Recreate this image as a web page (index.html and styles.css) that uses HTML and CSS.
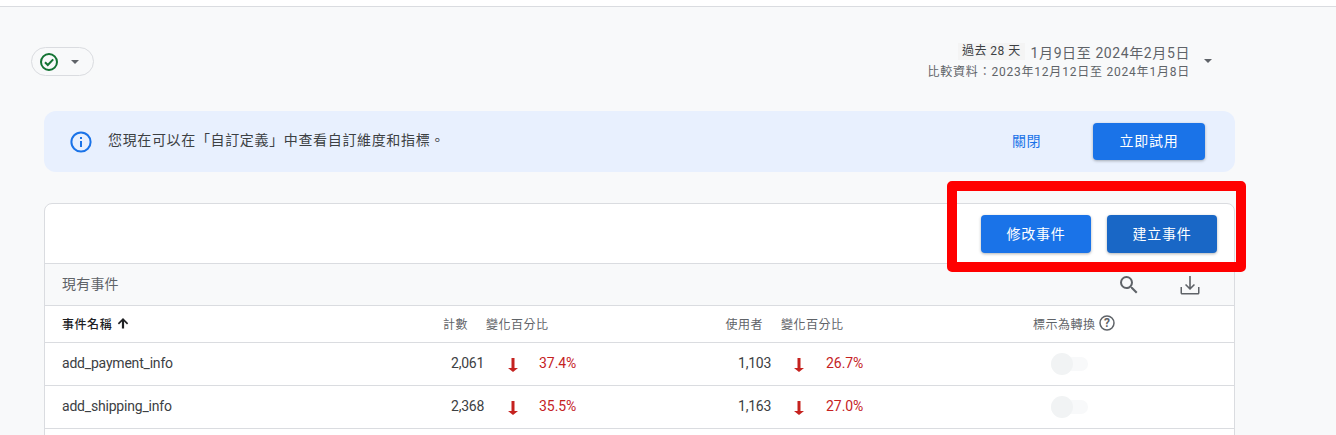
FILE: index.html
```html
<!DOCTYPE html>
<html lang="zh-Hant">
<head>
<meta charset="utf-8">
<title>事件</title>
<link rel="stylesheet" href="styles.css">
</head>
<body>
<div class="topbar"></div>
<main class="page">
  <div class="filters">
    <button class="chip">
      <svg class="chip-check" viewBox="0 0 20 20" width="20" height="20"><circle cx="10" cy="10" r="8" fill="none" stroke="#137333" stroke-width="2"/><path d="M6 10.200l2.800 2.800L14.200 7.400" fill="none" stroke="#137333" stroke-width="2"/></svg>
      <span class="caret"></span>
    </button>
    <div class="dates">
      <div class="dates-text">
        <div class="date-main"><span class="date-tag">過去 28 天</span><span class="date-range">1月9日至 2024年2月5日</span></div>
        <div class="date-sub">比較資料：2023年12月12日至 2024年1月8日</div>
      </div>
      <span class="caret date-caret"></span>
    </div>
  </div>

  <section class="banner">
    <svg class="banner-icon" viewBox="0 0 22 22" width="22" height="22"><circle cx="11" cy="11" r="9.600" fill="none" stroke="#1a73e8" stroke-width="2"/><rect x="10" y="10" width="2" height="6" fill="#1a73e8"/><rect x="10" y="6" width="2" height="2" fill="#1a73e8"/></svg>
    <p class="banner-text">您現在可以在「自訂定義」中查看自訂維度和指標。</p>
    <a class="banner-close">關閉</a>
    <button class="btn">立即試用</button>
  </section>

  <section class="card">
    <div class="card-actions">
      <button class="btn">修改事件</button>
      <button class="btn btn-dark">建立事件</button>
    </div>
    <div class="card-title">
      <span class="card-title-text">現有事件</span>
      <div class="card-tools">
        <svg viewBox="0 0 24 24" width="24" height="24"><path fill="#5f6368" d="M15.500 14h-.79l-.28-.27A6.470 6.470 0 0 0 16 9.500 6.500 6.500 0 1 0 9.500 16c1.610 0 3.090-.59 4.230-1.570l.27.28v.79l5 4.990L20.490 19l-4.990-5zm-6 0C7.010 14 5 11.990 5 9.500S7.010 5 9.500 5 14 7.010 14 9.500 11.990 14 9.500 14z"/></svg>
        <svg viewBox="0 0 24 24" width="24" height="24"><path fill="#5f6368" d="M20 14v6H4v-6H2.500v6c0 .8.7 1.500 1.500 1.500h16c.8 0 1.500-.7 1.500-1.500v-6H20zM12 17l-5-5 1.100-1.100 3.100 3.100V3h1.600v11l3.100-3.100L17 12l-5 5z"/></svg>
      </div>
    </div>
    <div class="table-head">
      <div class="th-name">事件名稱 <svg viewBox="0 0 12 12" width="12" height="12"><path fill="#202124" d="M4.900 11.500V4.600L2 7.400.8 6.200 6 1l5.200 5.200L10 7.400 7.100 4.600v6.900z"/></svg></div>
      <div class="num">計數</div>
      <div class="th-change">變化百分比</div>
      <div class="num">使用者</div>
      <div class="th-change">變化百分比</div>
      <div class="th-conv">標示為轉換 <svg viewBox="0 0 16 16" width="16" height="16"><circle cx="8" cy="8" r="7" fill="none" stroke="#5f6368" stroke-width="1.500"/><text x="8" y="12" text-anchor="middle" class="help-mark">?</text></svg></div>
    </div>
    <div class="row">
      <div class="name">add_payment_info</div>
      <div class="value">2,061</div>
      <div class="arrow"><svg viewBox="0 0 12 16" width="12" height="16"><path fill="#c5221f" d="M4.500 1h3v10H11L6 15 1 11h3.500z"/></svg></div>
      <div class="pct">37.4%</div>
      <div class="value">1,103</div>
      <div class="arrow arrow-users"><svg viewBox="0 0 12 16" width="12" height="16"><path fill="#c5221f" d="M4.500 1h3v10H11L6 15 1 11h3.500z"/></svg></div>
      <div class="pct">26.7%</div>
      <div class="conv"><span class="toggle"><span class="knob"></span></span></div>
    </div>
    <div class="row">
      <div class="name">add_shipping_info</div>
      <div class="value">2,368</div>
      <div class="arrow"><svg viewBox="0 0 12 16" width="12" height="16"><path fill="#c5221f" d="M4.500 1h3v10H11L6 15 1 11h3.500z"/></svg></div>
      <div class="pct">35.5%</div>
      <div class="value">1,163</div>
      <div class="arrow arrow-users"><svg viewBox="0 0 12 16" width="12" height="16"><path fill="#c5221f" d="M4.500 1h3v10H11L6 15 1 11h3.500z"/></svg></div>
      <div class="pct">27.0%</div>
      <div class="conv"><span class="toggle"><span class="knob"></span></span></div>
    </div>
    <div class="row"></div>
  </section>
</main>
<div class="highlight"></div>
</body>
</html>
```

FILE: styles.css
```css
* { box-sizing: border-box; }
html, body { margin: 0; height: 435px; overflow: hidden; }
body {
  position: relative;
  background: #f8f9fa;
  color: #3c4043;
  font-family: Roboto, "Noto Sans CJK TC", sans-serif;
  font-size: 14px;
}
.topbar { height: 7px; background: #fff; border-bottom: 1px solid #dadce0; }
.page { padding: 0 101px 0 44px; }

.filters {
  display: flex;
  justify-content: space-between;
  height: 104px;
  padding: 36px 0 0;
  margin-left: -13px;
  margin-right: -101px;
}
.chip {
  display: flex;
  align-items: center;
  width: 63px;
  height: 29px;
  margin-top: 4px;
  padding: 0 0 0 7px;
  background: transparent;
  border: 1px solid #dadce0;
  border-radius: 15px;
}
.chip-check { flex: none; }
.caret {
  display: block;
  width: 0;
  height: 0;
  margin-left: 12px;
  border-left: 4.500px solid transparent;
  border-right: 4.500px solid transparent;
  border-top: 4.500px solid #5f6368;
}
.dates { display: flex; align-items: flex-start; padding-right: 124px; }
.dates-text { text-align: right; color: #5f6368; }
.date-main { display: flex; justify-content: flex-end; align-items: center; gap: 6px; height: 17px; }
.date-range { font-size: 14px; letter-spacing: .6px; }
.date-tag { background: #f4f4f4; font-size: 12px; height: 17px; line-height: 16px; padding: 0 4px; letter-spacing: .45px; color: #3c4043; }
.date-sub { margin-top: 5px; font-size: 12px; line-height: 15px; letter-spacing: .78px; }
.date-caret { margin: 16px 0 0 14px; }

.banner {
  display: flex;
  align-items: center;
  width: 1191px;
  height: 61px;
  padding: 0 30px 0 26px;
  background: #e8f0fe;
  border-radius: 12px;
}
.banner-icon { flex: none; margin-top: 1px; }
.banner-text { flex: 1; margin: 0 0 0 16px; padding-bottom: 5px; font-size: 14px; letter-spacing: .65px; color: #3c4043; }
.banner-close { margin-right: 52px; padding-bottom: 3px; color: #1a73e8; font-size: 14px; letter-spacing: .5px; }

.btn {
  display: block;
  width: 112px;
  height: 37px;
  padding: 0 0 3px;
  border: 0;
  border-radius: 4px;
  background: #1a73e8;
  color: #fff;
  font: inherit;
  font-size: 14px;
  letter-spacing: .7px;
  box-shadow: 0 1px 3px rgba(60,64,67,.4);
}

.card {
  width: 1191px;
  margin-top: 31px;
  background: #fff;
  border: 1px solid #dadce0;
  border-radius: 8px 8px 0 0;
}
.card-actions {
  display: flex;
  justify-content: flex-end;
  gap: 16px;
  height: 60px;
  padding: 11px 17px 0 0;
  border-bottom: 1px solid #dadce0;
}
.card-actions .btn { width: 110px; height: 38px; }
.btn-dark { background: #1967c6; }
.card-title {
  display: flex;
  justify-content: space-between;
  align-items: center;
  height: 42px;
  padding: 0 32px 0 17px;
  background: #f8f9fa;
  border-bottom: 1px solid #dadce0;
  color: #5f6368;
}
.card-title-text { padding-bottom: 4px; letter-spacing: .2px; }
.card-tools { display: flex; gap: 37px; margin-top: 1px; }

.table-head, .row { display: grid; align-items: center; padding-left: 17px; border-bottom: 1px solid #dadce0; }
.table-head {
  grid-template-columns: 338px 68px 182px 113px 252px 1fr;
  height: 37px;
  padding-bottom: 2px;
  font-size: 12px;
  color: #5f6368;
}
.th-name { display: flex; align-items: center; gap: 5px; color: #202124; font-weight: 500; letter-spacing: .55px; }
.num { text-align: right; letter-spacing: .5px; }
.th-change { padding-left: 18px; letter-spacing: .5px; }
.th-conv { display: flex; align-items: center; gap: 3px; padding-left: 18px; letter-spacing: .5px; }
.help-mark { font-size: 12px; font-weight: 700; fill: #5f6368; letter-spacing: 0; }

.row {
  grid-template-columns: 338px 84px 55px 111px 121px 55px 189px 1fr;
  height: 43px;
  font-size: 14px;
  color: #3c4043;
}
.name { padding-bottom: 2px; letter-spacing: -.2px; }
.value { padding-bottom: 2px; text-align: right; letter-spacing: -.25px; }
.arrow { display: flex; padding-left: 23px; padding-top: 2px; }
.arrow-users { padding-left: 22px; }
.pct { padding-bottom: 2px; color: #c5221f; font-size: 14px; letter-spacing: -.05px; }
.conv { padding-left: 36px; }
.toggle {
  display: block;
  position: relative;
  width: 37px;
  height: 14px;
  border-radius: 7px;
  background: #f8f9fa;
}
.knob {
  position: absolute;
  left: 0;
  top: -4px;
  width: 22px;
  height: 22px;
  border-radius: 50%;
  background: #f1f3f4;
}

.highlight {
  position: absolute;
  left: 947px;
  top: 181px;
  width: 299px;
  height: 91px;
  border: 10px solid #ff0000;
  border-radius: 5px;
}
```
